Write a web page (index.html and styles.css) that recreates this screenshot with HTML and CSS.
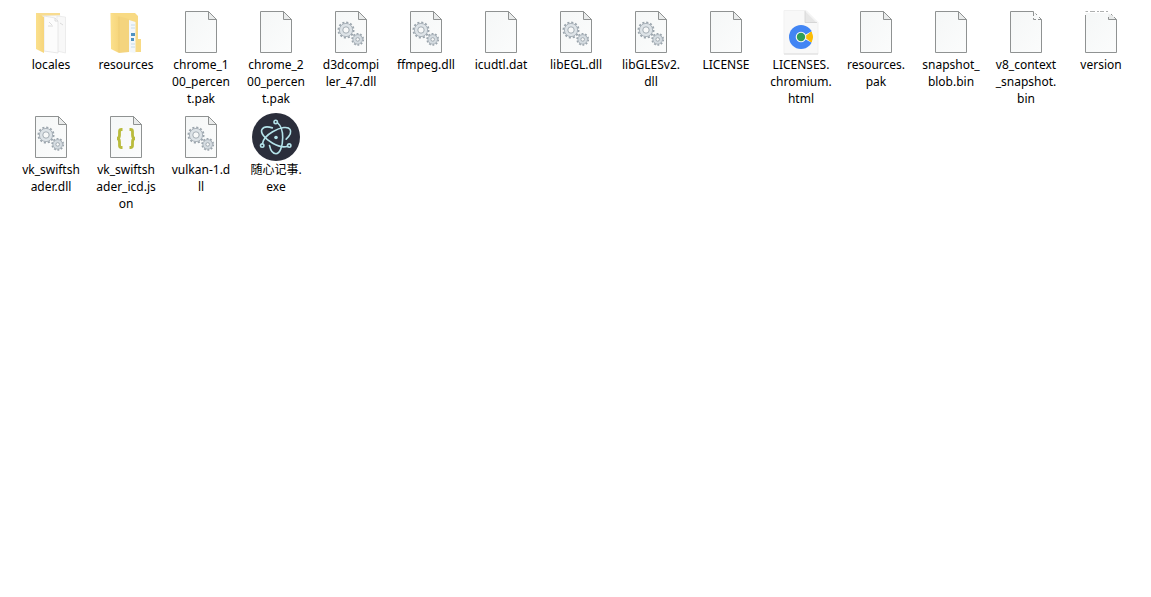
FILE: index.html
```html
<!DOCTYPE html>
<html lang="zh-CN">
<head>
<meta charset="utf-8">
<title>Files</title>
<link rel="stylesheet" href="styles.css">
</head>
<body>
<svg class="defs" aria-hidden="true">
  <defs>
    <linearGradient id="paper" x1="0" y1="0" x2="1" y2="1"><stop offset="0" stop-color="#f5f7f7"/><stop offset="1" stop-color="#fbfcfc"/></linearGradient>
    <linearGradient id="flap" x1="0" y1="0" x2="1" y2="0"><stop offset="0" stop-color="#fbe08c"/><stop offset="1" stop-color="#f6d57c"/></linearGradient>
    <symbol id="page" viewBox="0 0 48 48">
      <path d="M8.5 3.5H31.5L39.5 11.5V44.5H8.5Z" fill="url(#paper)" stroke="#8f9292"/>
      <path d="M31.5 3.5V11.5H39.5Z" fill="#e9ebeb" stroke="#8f9292"/>
    </symbol>
    <symbol id="dll" viewBox="0 0 48 48">
      <use href="#page"/>
      <g fill="none" stroke="#9ba5ad">
        <circle cx="19" cy="22" r="7.6" stroke-width="1.8" stroke-dasharray="2.1 1.88"/>
        <circle cx="19" cy="22" r="6.6" stroke-width=".8" fill="#dde3e7"/>
        <circle cx="19" cy="22" r="3.2" stroke-width=".9" fill="#f7f8f8"/>
        <circle cx="30.7" cy="31.4" r="5.6" stroke-width="1.6" stroke-dasharray="1.8 1.72"/>
        <circle cx="30.7" cy="31.4" r="4.8" stroke-width=".8" fill="#d5dce1"/>
        <circle cx="30.7" cy="31.4" r="1.8" stroke-width=".9" fill="#f7f8f8"/>
      </g>
    </symbol>
    <path id="orbit" d="M25.7 10C28.7 12.5 30.7 18 30.7 24.5C30.7 34 27.7 40.7 24 40.7C21 40.7 18.6 37.5 17.5 32.5"/>
  </defs>
</svg>
<ul class="files">
  <li class="file">
    <svg class="icon" viewBox="0 0 48 48" aria-hidden="true">
      <path d="M9 5H33V42H17L9 38Z" fill="#f8dc90"/>
      <path d="M15 8L33 7.5V43H17Z" fill="#fafafa" stroke="#ececec" stroke-width=".6"/>
      <path d="M30 8L38.5 9V45L30 43Z" fill="#f8f8f8" stroke="#e3e3e3" stroke-width=".6"/>
      <path d="M17 8L28 10L31 13V45L17 43Z" fill="#fcfcfc" stroke="#dfdfdf" stroke-width=".7"/>
      <path d="M28 10V13H31M22 14L25 17M21 18H26M33 15L36 17" fill="none" stroke="#d3d3d3" stroke-width=".8"/>
      <path d="M9 5L17 9V45L9 41Z" fill="url(#flap)"/>
    </svg>
    <span class="name">locales</span>
  </li>
  <li class="file">
    <svg class="icon" viewBox="0 0 48 48" aria-hidden="true">
      <path d="M8.500 5H33L36 8V31H39V44H18L9 40Z" fill="#f8da84"/>
      <path d="M27 12L33.500 14V45L27 44Z" fill="#f3f7fa"/>
      <path d="M29 17H33M29 20H33M29 36H33M29 39H33" stroke="#c6dae8"/>
      <path d="M29 25H33V28H29ZM29 30H32V33H29Z" fill="#4f92c0"/>
      <path d="M16 8L27 11V44L17 45Z" fill="#f4d47e"/>
      <path d="M9 5L17 9V45L9 41Z" fill="url(#flap)"/>
      <path d="M17 9V44" stroke="#edca70" stroke-width=".6"/>
    </svg>
    <span class="name">resources</span>
  </li>
  <li class="file"><svg class="icon" aria-hidden="true"><use href="#page"/></svg><span class="name">chrome_1<br>00_percen<br>t.pak</span></li>
  <li class="file"><svg class="icon" aria-hidden="true"><use href="#page"/></svg><span class="name">chrome_2<br>00_percen<br>t.pak</span></li>
  <li class="file"><svg class="icon" aria-hidden="true"><use href="#dll"/></svg><span class="name">d3dcompi<br>ler_47.dll</span></li>
  <li class="file"><svg class="icon" aria-hidden="true"><use href="#dll"/></svg><span class="name">ffmpeg.dll</span></li>
  <li class="file"><svg class="icon" aria-hidden="true"><use href="#page"/></svg><span class="name">icudtl.dat</span></li>
  <li class="file"><svg class="icon" aria-hidden="true"><use href="#dll"/></svg><span class="name">libEGL.dll</span></li>
  <li class="file"><svg class="icon" aria-hidden="true"><use href="#dll"/></svg><span class="name">libGLESv2.<br>dll</span></li>
  <li class="file"><svg class="icon" aria-hidden="true"><use href="#page"/></svg><span class="name">LICENSE</span></li>
  <li class="file">
    <svg class="icon" viewBox="0 0 48 48" aria-hidden="true">
      <path d="M7 2.5H29L41 14.5V46H7Z" fill="#f8f8f8" stroke="#f1f1f1"/>
      <path d="M7 46H41" stroke="#dcdcdc"/>
      <path d="M28 3L40 15H28Z" fill="#e6e6e6"/>
      <path d="M28 3V14.5H40" fill="none" stroke="#d2d2d2" stroke-width=".8"/>
      <circle cx="24" cy="29" r="12" fill="#4285f4"/>
      <path d="M24 29L38 21.5V36.5Z" fill="#f7f7f7"/>
      <path d="M28 29L34.3 24Q36.8 29 34.3 34Z" fill="#fbbc05" stroke="#fbbc05" stroke-width="1"/>
      <circle cx="24" cy="29" r="5.3" fill="#f7f7f7"/>
      <circle cx="24" cy="29" r="4.2" fill="#2f9e57"/>
    </svg>
    <span class="name">LICENSES.<br>chromium.<br>html</span>
  </li>
  <li class="file"><svg class="icon" aria-hidden="true"><use href="#page"/></svg><span class="name">resources.<br>pak</span></li>
  <li class="file"><svg class="icon" aria-hidden="true"><use href="#page"/></svg><span class="name">snapshot_<br>blob.bin</span></li>
  <li class="file">
    <svg class="icon" viewBox="0 0 48 48" aria-hidden="true">
      <path d="M8.5 3.5H31.5L39.5 11.5V44.5H8.5Z" fill="url(#paper)"/>
      <path d="M31.5 3.5H8.5V44.5H39.5V11.5M31.5 3.5V8M31.5 10V11.5H34M36 11.5H39.5L37 9M35 7L33.5 5.5" fill="none" stroke="#8f9292"/>
    </svg>
    <span class="name">v8_context<br>_snapshot.<br>bin</span>
  </li>
  <li class="file">
    <svg class="icon" viewBox="0 0 48 48" aria-hidden="true">
      <path d="M8.5 5H32L39.5 11.5V44.5H8.5Z" fill="url(#paper)"/>
      <path d="M31.5 6V11.5H39.5L36 8Z" fill="#e9ebeb"/>
      <path d="M8.5 7V44.5H39.5V11.5H31.5V9M39.5 11.5L37 9M34 6L35.5 7.5" fill="none" stroke="#8f9292"/>
      <path d="M8.5 3.5H11M13 3.5H18M20 3.5H22M23 3.5H27M29 3.5H31" stroke="#aeb0b0"/>
    </svg>
    <span class="name">version</span>
  </li>
  <li class="file"><svg class="icon" aria-hidden="true"><use href="#dll"/></svg><span class="name">vk_swiftsh<br>ader.dll</span></li>
  <li class="file">
    <svg class="icon" viewBox="0 0 48 48" aria-hidden="true">
      <use href="#page"/>
      <path d="M20.5 16.5H19.5Q17.5 16.5 17.5 18.5V22Q17.5 25.5 15 25.5Q17.5 25.5 17.5 29V32.5Q17.5 34.5 19.5 34.5H20.5M27.5 16.5H28.5Q30.5 16.5 30.5 18.5V22Q30.5 25.5 33 25.5Q30.5 25.5 30.5 29V32.5Q30.5 34.5 28.5 34.5H27.5" fill="none" stroke="#b9bb3c" stroke-width="2.8"/>
    </svg>
    <span class="name">vk_swiftsh<br>ader_icd.js<br>on</span>
  </li>
  <li class="file"><svg class="icon" aria-hidden="true"><use href="#dll"/></svg><span class="name">vulkan-1.d<br>ll</span></li>
  <li class="file">
    <svg class="icon" viewBox="0 0 48 48" aria-hidden="true">
      <circle cx="24" cy="24" r="24" fill="#2b2e3b"/>
      <g fill="none" stroke="#b4e3ea" stroke-width="1.6" stroke-linecap="round">
        <use href="#orbit"/>
        <use href="#orbit" transform="rotate(120 24 24.5)"/>
        <use href="#orbit" transform="rotate(240 24 24.5)"/>
        <circle cx="23.7" cy="8.9" r="1.7"/>
        <circle cx="10.2" cy="32.6" r="1.7"/>
        <circle cx="37.2" cy="32.6" r="1.7"/>
      </g>
      <circle cx="24" cy="24.5" r="1.8" fill="#b4e3ea"/>
    </svg>
    <span class="name">随心记事.<br>exe</span>
  </li>
</ul>
</body>
</html>
```
FILE: styles.css
```css
body {
  margin: 0;
  background: #fff;
  color: #000;
  font: 12px/17px "Noto Sans", "Noto Sans CJK SC", sans-serif;
}

.defs {
  position: absolute;
  width: 0;
  height: 0;
}

.files {
  display: grid;
  grid-template-columns: repeat(auto-fill, 74px);
  gap: 6px 1px;
  margin: 0;
  padding: 8px 12px 8px 14px;
  list-style: none;
}

.file {
  display: flex;
  flex-direction: column;
  align-items: center;
}

.icon {
  display: block;
  width: 48px;
  height: 48px;
}

.name {
  text-align: center;
  white-space: nowrap;
}
```
